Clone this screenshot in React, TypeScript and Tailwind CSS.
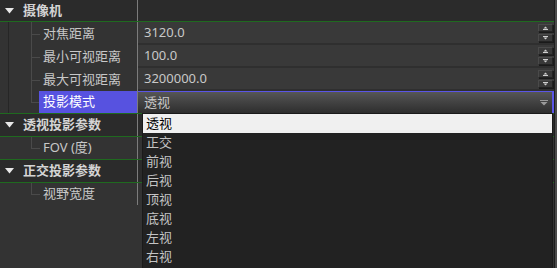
import React from 'react';

const FONT = "font-['Noto_Sans','Noto_Sans_CJK_SC',sans-serif]";

const Triangle = () => (
  <svg width="9" height="6" viewBox="0 0 9 6" className="shrink-0">
    <path d="M0 0 L9 0 L4.5 5.5 Z" fill="#e8e8e8" />
  </svg>
);

const GroupHeader: React.FC<{ label: string; top?: boolean; h: string }> = ({ label, top = true, h }) => (
  <div className={`flex ${h} border-b border-[#1f6a1f] ${top ? 'border-t' : ''} bg-[#2b2b2b]`}>
    <div className="flex w-[137px] items-center gap-[9px] pl-[5px] text-[13px] font-bold text-[#d4d4d4]">
      <Triangle />
      <span>{label}</span>
    </div>
    <div className="w-px bg-[#7c7c7c]" />
    <div className="flex-1" />
  </div>
);

const Spin = () => (
  <div className="flex flex-col gap-[2px] pr-[1px]">
    <div className="flex h-[8px] w-[15px] items-center justify-center border border-[#222] border-t-[#4a4a4a] border-l-[#4a4a4a] bg-[#383838] shadow-[1px_1px_0_#1a1a1a]">
      <svg width="5" height="4" viewBox="0 0 5 4"><path d="M2.5 0.5 L4.5 2.5 L0.5 2.5 Z M0 3 H5 V4 H0 Z" fill="#cfcfcf" /></svg>
    </div>
    <div className="flex h-[8px] w-[15px] items-center justify-center border border-[#222] border-t-[#4a4a4a] border-l-[#4a4a4a] bg-[#383838] shadow-[1px_1px_0_#1a1a1a]">
      <svg width="5" height="4" viewBox="0 0 5 4"><path d="M0 0 H5 V1 H0 Z M0.5 1.5 L4.5 1.5 L2.5 3.5 Z" fill="#cfcfcf" /></svg>
    </div>
  </div>
);

const TreeLines: React.FC<{ outer?: boolean; last?: boolean }> = ({ outer = true, last = false }) => (
  <>
    {outer && <div className="absolute left-[8px] top-0 h-full w-px bg-[#262626]" />}
    <div className={`absolute left-[31px] top-0 w-px bg-[#4a4a4a] ${last ? 'h-1/2' : 'h-full'}`} />
    <div className="absolute left-[31px] top-1/2 h-px w-[9px] bg-[#4a4a4a]" />
  </>
);

const PropRow: React.FC<{ label: string; value: string; h: string; last?: boolean; outer?: boolean }> = ({ label, value, h, last, outer }) => (
  <div className={`flex ${h}`}>
    <div className="relative flex w-[137px] items-center pl-[43px] text-[13px] text-[#c8c8c8]">
      <TreeLines last={last} outer={outer} />
      <span>{label}</span>
    </div>
    <div className="w-px bg-[#7c7c7c]" />
    <div className="flex flex-1 items-center justify-between border-b-2 border-[#2f2f2f] bg-[#393939] pl-[6px] text-[13px] text-[#c8c8c8]">
      <span>{value}</span>
      <Spin />
    </div>
  </div>
);

const SubRow: React.FC<{ label: string; h: string }> = ({ label, h }) => (
  <div className={`flex ${h}`}>
    <div className="relative flex w-[137px] items-center pl-[43px] text-[13px] text-[#c8c8c8]">
      <TreeLines outer={false} last />
      <span>{label}</span>
    </div>
    <div className="w-px bg-[#7c7c7c]" />
    <div className="flex-1" />
  </div>
);

const options = ['透视', '正交', '前视', '后视', '顶视', '底视', '左视', '右视'];

export default function App() {
  return (
    <div className={`relative flex h-[268px] w-[557px] overflow-hidden bg-[#333333] ${FONT}`}>
      <div className="flex w-[554px] flex-col">
        <GroupHeader label="摄像机" top={false} h="h-[22px]" />
        <PropRow label="对焦距离" value="3120.0" h="h-[23px]" />
        <PropRow label="最小可视距离" value="100.0" h="h-[23px]" />
        <PropRow label="最大可视距离" value="3200000.0" h="h-[23px]" />
        <div className="flex h-[22px]">
          <div className="relative w-[137px]">
            <TreeLines last />
            <div className="absolute inset-y-0 left-[39px] right-0 flex items-center bg-[#5752e0] pl-[4px] text-[13px] text-white">
              投影模式
            </div>
          </div>
          <div className="w-px bg-[#7c7c7c]" />
          <div className="flex flex-1 items-center justify-between border-t border-r-2 border-[#5a55e6] bg-gradient-to-b from-[#565656] to-[#2e2e2e] pl-[6px] pr-[4px] text-[13px] text-[#c8c8c8]">
            <span>透视</span>
            <svg width="8" height="6" viewBox="0 0 8 6"><path d="M0 0 H8 V1 H0 Z M0.5 2 H7.5 L4 5.5 Z" fill="#9a9a9a" /></svg>
          </div>
        </div>
        <GroupHeader label="透视投影参数" h="h-[24px]" />
        <SubRow label="FOV (度)" h="h-[22px]" />
        <GroupHeader label="正交投影参数" h="h-[24px]" />
        <SubRow label="视野宽度" h="h-[22px]" />
        <div className="flex flex-1">
          <div className="w-[137px]" />
          <div className="flex-1" />
        </div>
      </div>
      <div className="w-[3px] border-l border-[#1e1e1e] bg-[#4a4a4a]" />

      <div className="absolute left-[142px] top-[113px] h-[158px] w-[411px] border border-[#1a1a1a] bg-[#222222] text-[13px]">
        {options.map((o, i) => (
          <div
            key={o}
            className={`flex h-[19px] items-center pl-[3px] ${i === 0 ? 'bg-[#f0f0f0] text-black' : 'text-[#c4c4c4]'}`}
          >
            {o}
          </div>
        ))}
      </div>
    </div>
  );
}
